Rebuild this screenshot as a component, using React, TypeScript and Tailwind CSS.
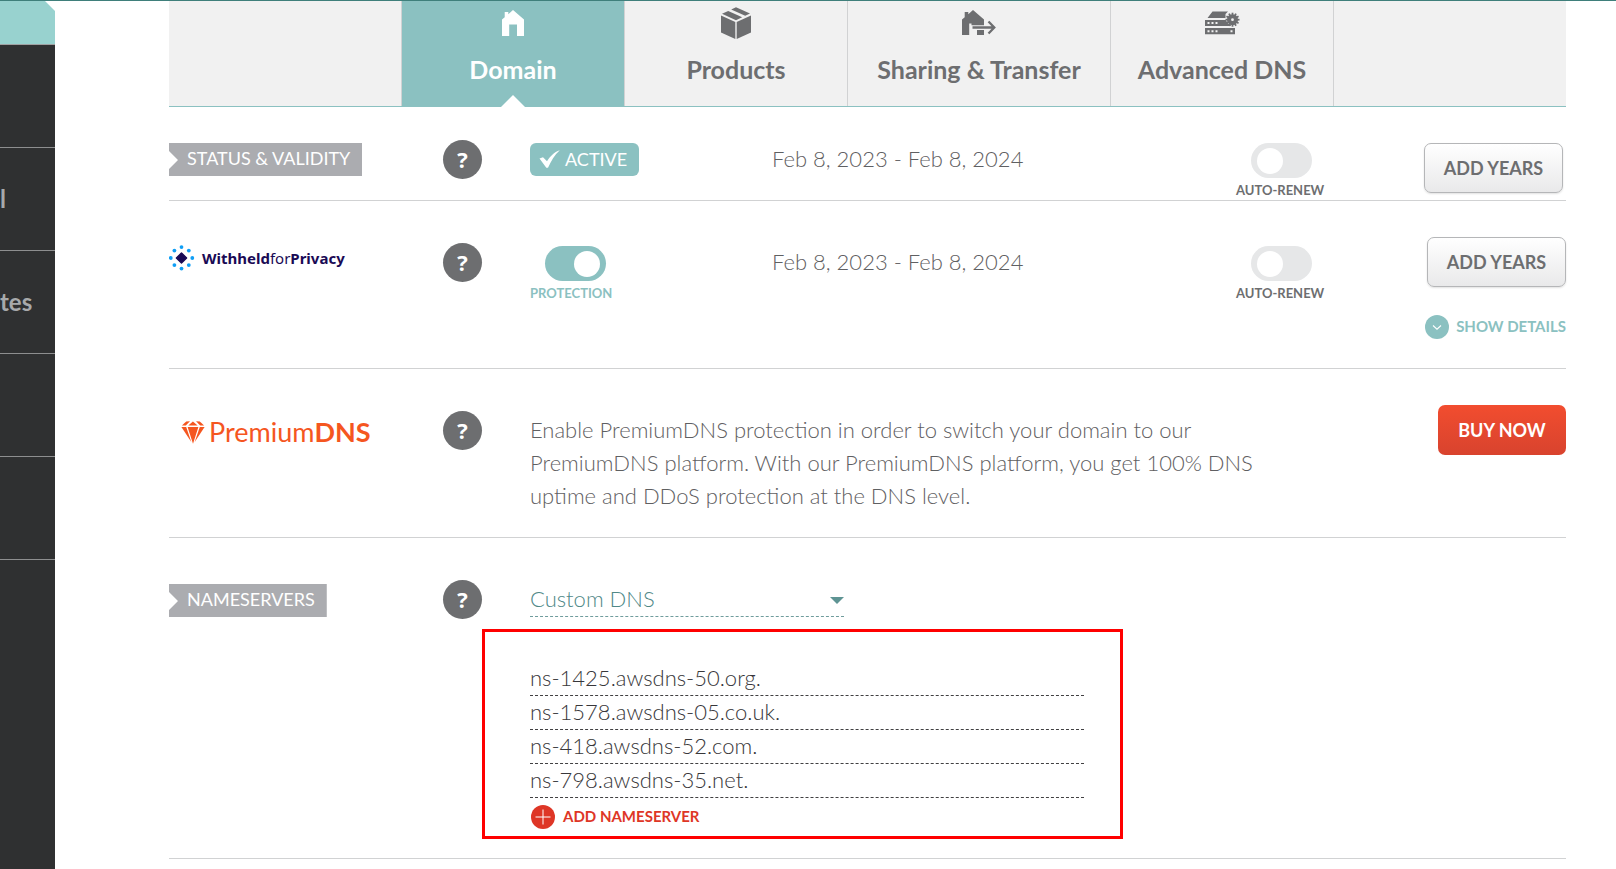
import type { ReactNode } from "react";

const rowGrid =
  "grid grid-cols-[274px_87px_242px_minmax(0,1fr)_190px_140px] items-start border-b border-[#d1d2d3]";

function HomeIcon() {
  return (
    <svg width="22" height="26" viewBox="0 0 22 26" fill="currentColor" aria-hidden="true">
      <path d="M0 26V9.5L2.7 7.2V2H6.3V4.2L11 0L22 9.5V26H15V14.5H7.2V26Z" />
    </svg>
  );
}

function BoxIcon() {
  return (
    <svg width="30" height="32" viewBox="0 0 30 32" fill="currentColor" aria-hidden="true">
      <path d="M0 8.6L14.3 15V32L0 25.6Z" />
      <path d="M30 8.6L15.7 15V32L30 25.6Z" />
      <path d="M15 .2L29 6.6L24.2 8.8L10.2 2.4Z" />
      <path d="M1 6.8L7.2 3.9L21.2 10.3L15 13.2Z" />
    </svg>
  );
}

function TransferIcon() {
  return (
    <svg width="34" height="26" viewBox="0 0 34 26" fill="currentColor" aria-hidden="true">
      <path d="M0 25V9.5L2.7 7.2V2H6.3V4.2L11 0L22 9.5V15.2H9.5V13.5H7.2V25Z" />
      <path d="M15 20H22V25H15Z" />
      <path d="M10.5 17.5H32M26.5 11.5L32.3 17.5L26.5 23.5" fill="none" stroke="currentColor" strokeWidth="2.3" />
    </svg>
  );
}

function ServerIcon() {
  const teeth = [0, 30, 60, 90, 120, 150, 180, 210, 240, 270, 300, 330];
  return (
    <svg width="35" height="24" viewBox="0 0 35 24" fill="currentColor" aria-hidden="true">
      <path d="M7.5 0.5H23L20.5 3V7H2.5Z" />
      <path fillRule="evenodd" d="M0 9H20.8L22.5 12L26 14.5V15H0ZM2.5 11V13H4.5V11ZM6.5 11V13H8.5V11ZM10.5 11V13H12.5V11Z" />
      <path fillRule="evenodd" d="M0 17H30V23.3H0ZM2.5 19.2V21.2H4.5V19.2ZM6.5 19.2V21.2H8.5V19.2ZM10.5 19.2V21.2H12.5V19.2ZM25.5 19.2V21.2H27.5V19.2Z" />
      <path fillRule="evenodd" d="M27.5 3.2A5.5 5.5 0 1 0 27.5 14.2A5.5 5.5 0 1 0 27.5 3.2ZM27.5 7.3A1.4 1.4 0 1 1 27.5 10.1A1.4 1.4 0 1 1 27.5 7.3Z" />
      {teeth.map((a) => (
        <rect key={a} x="26.6" y="1.7" width="1.8" height="3" transform={`rotate(${a} 27.5 8.7)`} />
      ))}
    </svg>
  );
}

function WithheldMark() {
  return (
    <svg width="26" height="26" viewBox="0 0 26 26" aria-hidden="true">
      <path d="M12.5 8L17.6 13L12.5 18L7.4 13Z" fill="#1a0a55" stroke="#1a0a55" strokeWidth="1.4" strokeLinejoin="round" />
      <g fill="#0f9ef5">
        <circle cx="12.5" cy="2.1" r="1.9" />
        <circle cx="12.5" cy="23.6" r="1.9" />
        <circle cx="1.8" cy="13" r="1.9" />
        <circle cx="23.3" cy="13" r="1.9" />
        <circle cx="5.4" cy="5.6" r="1.9" />
        <circle cx="19.8" cy="5.6" r="1.9" />
        <circle cx="5.4" cy="20.1" r="1.9" />
        <circle cx="19.8" cy="20.1" r="1.9" />
      </g>
    </svg>
  );
}

function GemIcon() {
  return (
    <svg width="24" height="23" viewBox="0 0 24 23" fill="#f5561f" aria-hidden="true">
      <path d="M5.2 .6L9 .2L4.8 4.6H.9Z" />
      <path d="M18.8 .6L15 .2L19.2 4.6H23.1Z" />
      <path d="M11.9 .4L16.6 4.4H7.3Z" />
      <path d="M.4 6H5.2L10.3 21Z" />
      <path d="M23.6 6H18.8L13.7 21Z" />
      <path d="M6.6 6H17.4L12 22.8Z" />
    </svg>
  );
}

function Tab({ icon, label, width, active }: { icon: ReactNode; label: string; width: string; active?: boolean }) {
  return (
    <button
      type="button"
      role="tab"
      aria-selected={!!active}
      className={`relative flex h-full flex-col items-center border-r border-[#d1d2d3] ${width} ${
        active ? "bg-[#8bc1c1] text-white" : "text-[#6d6e70]"
      }`}
    >
      <span className="flex h-[44px] items-center">{icon}</span>
      <span className="mt-2 text-[25px] leading-8 font-bold">{label}</span>
      {active && (
        <span className="absolute -bottom-px left-1/2 h-3 w-6 -translate-x-1/2 bg-white [clip-path:polygon(50%_0,100%_100%,0_100%)]" />
      )}
    </button>
  );
}

function Tag({ children }: { children: ReactNode }) {
  return (
    <h2 className="inline-block h-[33px] bg-[#abacb0] pr-3 pl-[18px] text-[18px] leading-[30px] text-white [clip-path:polygon(0_0,100%_0,100%_100%,0_100%,0_26px,9px_17px,0_8px)]">
      {children}
    </h2>
  );
}

function Help({ topic }: { topic: string }) {
  return (
    <button
      type="button"
      aria-label={`Help: ${topic}`}
      className="flex h-[39px] w-[39px] items-center justify-center rounded-full bg-[#6d6e70] font-['Open_Sans',sans-serif] text-[22px] font-bold text-white"
    >
      ?
    </button>
  );
}

function Toggle({ label, on }: { label: string; on?: boolean }) {
  return (
    <label
      className={`inline-flex flex-col items-start gap-1 text-[13px] leading-4 font-bold ${
        on ? "text-[#8bc1c1]" : "text-[#6d6e70]"
      }`}
    >
      <input
        type="checkbox"
        role="switch"
        defaultChecked={on}
        className="ml-[15px] flex h-[35px] w-[61px] appearance-none items-center rounded-full bg-[#e6e7e8] px-[6px] before:h-[26px] before:w-[26px] before:rounded-full before:bg-white before:content-[''] checked:justify-end checked:bg-[#8bc1c1]"
      />
      {label}
    </label>
  );
}

function AddYears() {
  return (
    <button
      type="button"
      className="h-[50px] w-[139px] shrink-0 rounded-[7px] border border-[#b5b6b8] bg-linear-to-b from-white to-[#e9e9ea] text-[18px] font-bold text-[#6d6e70] shadow-[0_1px_2px_rgba(0,0,0,0.12)]"
    >
      ADD YEARS
    </button>
  );
}

const nameservers = ["ns-1425.awsdns-50.org.", "ns-1578.awsdns-05.co.uk.", "ns-418.awsdns-52.com.", "ns-798.awsdns-35.net."];
const sideLinks = ["", "l", "tes", "", ""];

export default function App() {
  return (
    <div className="flex min-h-screen border-t border-[#3f7f7b] bg-white font-[Lato,sans-serif] text-[#6d6e70]">
      <nav className="w-[55px] shrink-0 bg-[#2f3031] text-[24px] font-bold text-[#a7a9ab]">
        <div className="bg-white">
          <div className="h-[44px] border-b border-[#a0a1a2] bg-[#98d2cf] [clip-path:polygon(0_0,45px_0,100%_10px,100%_100%,0_100%)]" />
        </div>
        {sideLinks.map((text, i) => (
          <a key={i} href="#" className="flex h-[103px] items-center border-b border-[#8d8e8f]">
            {text}
          </a>
        ))}
      </nav>

      <main className="ml-[114px] mr-[50px] min-w-0 flex-1">
        <div role="tablist" className="flex h-[106px] border-b border-[#8bc1c1] bg-[#f1f1f1]">
          <div className="w-[233px] border-r border-[#d1d2d3]" />
          <Tab icon={<HomeIcon />} label="Domain" width="w-[223px]" active />
          <Tab icon={<BoxIcon />} label="Products" width="w-[223px]" />
          <Tab icon={<TransferIcon />} label="Sharing & Transfer" width="w-[263px]" />
          <Tab icon={<ServerIcon />} label="Advanced DNS" width="w-[223px]" />
        </div>

        <section className={`${rowGrid} h-[94px] pt-9`}>
          <div><Tag>STATUS &amp; VALIDITY</Tag></div>
          <div className="-mt-[3px]"><Help topic="status" /></div>
          <div>
            <span className="inline-flex h-[33px] items-center gap-1 rounded-md bg-[#8bc1c1] pr-3 pb-0.5 pl-2 text-[18px] leading-[30px] text-white">
              <svg width="23" height="20" viewBox="0 0 23 20" fill="currentColor" aria-hidden="true">
                <path d="M1.5 9.5L5 8.3L9 12.3C12 7.5 16 3 21.8 1.2C16.5 6 13 12 10 18.8H8.3Z" />
              </svg>
              ACTIVE
            </span>
          </div>
          <p className="text-[22px] leading-[31px] font-light text-[#5f6062]">Feb 8, 2023 - Feb 8, 2024</p>
          <div><Toggle label="AUTO-RENEW" /></div>
          <div className="flex justify-end pr-[3px]"><AddYears /></div>
        </section>

        <section className={`${rowGrid} h-[168px] pt-9`}>
          <div className="flex items-center gap-[7px] pt-2">
            <WithheldMark />
            <span className="font-['Noto_Sans',sans-serif] text-[15px] leading-6 font-bold text-[#1a0a55]">
              Withheld<span className="font-normal">for</span>Privacy
            </span>
          </div>
          <div className="pt-[6px]"><Help topic="privacy protection" /></div>
          <div className="pt-[9px]"><Toggle label="PROTECTION" on /></div>
          <p className="pt-[9px] text-[22px] leading-[31px] font-light text-[#5f6062]">Feb 8, 2023 - Feb 8, 2024</p>
          <div className="pt-[9px]"><Toggle label="AUTO-RENEW" /></div>
          <div className="flex flex-col items-end gap-7">
            <AddYears />
            <a href="#" className="flex items-center gap-[7px] text-[15px] leading-[22px] font-bold whitespace-nowrap text-[#8bc1c1]">
              <svg width="24" height="24" viewBox="0 0 24 24" aria-hidden="true">
                <circle cx="12" cy="12" r="12" fill="#8bc1c1" />
                <path d="M8 10.5L12 14.2L16 10.5" fill="none" stroke="white" strokeWidth="1.1" />
              </svg>
              <span className="pb-0.5">SHOW DETAILS</span>
            </a>
          </div>
        </section>

        <section className={`${rowGrid} h-[169px] pt-9`}>
          <div className="flex items-center gap-1 pt-[11px] pl-3">
            <GemIcon />
            <span className="text-[27px] leading-8 font-normal text-[#f5561f]">
              Premium<b className="font-bold">DNS</b>
            </span>
          </div>
          <div className="pt-[6px]"><Help topic="PremiumDNS" /></div>
          <p className="col-span-3 max-w-[760px] pt-2 text-[22px] leading-[33px] font-light text-[#5f6062]">
            Enable PremiumDNS protection in order to switch your domain to our{" "}
            <br />
            PremiumDNS platform. With our PremiumDNS platform, you get 100% DNS uptime and DDoS protection at the DNS
            level.
          </p>
          <div className="flex justify-end">
            <button
              type="button"
              className="h-[50px] w-[128px] rounded-[7px] bg-linear-to-b from-[#f24d2f] to-[#d8432e] text-[18px] font-bold text-white"
            >
              BUY NOW
            </button>
          </div>
        </section>

        <section className={`${rowGrid} pt-[42px] pb-[19px]`}>
          <div className="pt-1"><Tag>NAMESERVERS</Tag></div>
          <div><Help topic="nameservers" /></div>
          <div className="col-span-4">
            <div className="relative w-[314px]">
              <select
                aria-label="Nameserver type"
                className="block h-[37px] w-full appearance-none border-b border-dashed border-[#6f9c9c] text-[22px] font-light text-[#4f8887]"
              >
                <option>Custom DNS</option>
              </select>
              <span className="pointer-events-none absolute top-[17px] right-0 h-[7px] w-[14px] bg-[#5e9493] [clip-path:polygon(0_0,100%_0,50%_100%)]" />
            </div>
            <div className="mt-3 -ml-12 w-[641px] border-3 border-[#ff0000] pt-[30px] pr-9 pb-[7px] pl-[45px]">
              {nameservers.map((ns, i) => (
                <input
                  key={ns}
                  aria-label={`Nameserver ${i + 1}`}
                  defaultValue={ns}
                  className="block h-[34px] w-full border-b border-dashed border-[#414042] pb-0.5 text-[22px] font-light text-[#38373a]"
                />
              ))}
              <button type="button" className="mt-[7px] flex items-center gap-2 pl-px text-[15px] leading-[22px] font-bold text-[#de3626]">
                <svg width="24" height="24" viewBox="0 0 24 24" aria-hidden="true">
                  <circle cx="12" cy="12" r="12" fill="#de3626" />
                  <path d="M4.5 12H19.5M12 4.5V19.5" stroke="white" strokeWidth="1" />
                </svg>
                <span className="pb-0.5">ADD NAMESERVER</span>
              </button>
            </div>
          </div>
        </section>
      </main>
    </div>
  );
}
